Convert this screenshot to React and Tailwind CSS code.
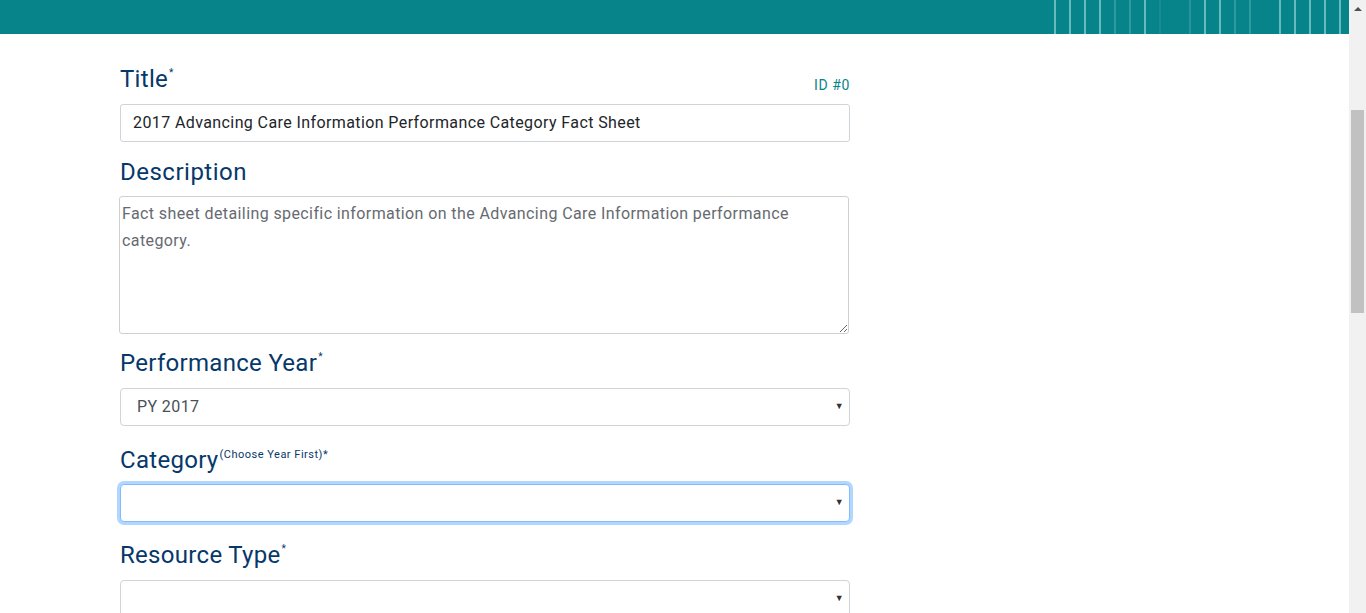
import React from "react";

const lines = [
  "opacity-60", "opacity-60", "opacity-60", "opacity-60", "opacity-25",
  "opacity-25", "opacity-60", "opacity-10", "opacity-0", "opacity-20",
  "opacity-60", "opacity-60", "opacity-25", "opacity-25", "opacity-0",
  "opacity-60", "opacity-60", "opacity-60", "opacity-60", "opacity-60",
];

const Label = ({ children, sup = "*", wide }) => (
  <label className="flex items-start text-[24px] leading-[29px] text-[#06386a] tracking-[0.3px]">
    {children}
    <span
      className={`leading-none mt-[3px] ml-[1px] ${
        wide ? "text-[11px] tracking-[0.5px]" : "text-[10px] tracking-normal"
      }`}
    >
      {sup}
    </span>
  </label>
);

const Select = ({ value, focus }) => (
  <div
    className={`h-[38px] flex items-center justify-between pl-[16px] pr-[5px] rounded-[4px] bg-white text-[16px] tracking-[0.4px] text-[#495057] ${
      focus
        ? "border border-[#80bdff] ring-[3px] ring-[#007bff]/30"
        : "border border-[#ced4da]"
    }`}
  >
    <span>{value}</span>
    <span className="text-[9px] text-[#333]">▼</span>
  </div>
);

export default function App() {
  return (
    <div className="flex h-screen overflow-hidden bg-white font-['Roboto',sans-serif]">
      <div className="flex-1 flex flex-col">
        {/* header bar */}
        <div className="h-[34px] shrink-0 bg-[#07848a] flex justify-end items-stretch pr-[8px] gap-[13px]">
          {lines.map((o, i) => (
            <div key={i} className={`w-[2px] bg-[#a6dcdd] ${o}`} />
          ))}
        </div>

        <div className="pl-[120px] pt-[31px] shrink-0">
          <div className="w-[730px]">
            <div className="flex justify-between items-end">
              <Label>Title</Label>
              <span className="text-[14px] text-[#07848a] -mb-[2px] tracking-[0.6px]">ID #0</span>
            </div>
            <div className="mt-[10px] h-[38px] border border-[#ced4da] rounded-[3px] flex items-center px-[12px] text-[16px] tracking-[0.4px] text-[#212529]">
              2017 Advancing Care Information Performance Category Fact Sheet
            </div>

            <div className="mt-[16px]">
              <label className="block text-[24px] leading-[29px] text-[#06386a] tracking-[0.5px]">Description</label>
            </div>
            <textarea
              className="mt-[9px] -ml-[1px] w-[730px] h-[138px] border border-[#d0d0d0] rounded-[3px] px-[2px] py-[3px] text-[16px] leading-[27px] tracking-[0.4px] text-[#666a70] resize-y outline-none block"
              defaultValue="Fact sheet detailing specific information on the Advancing Care Information performance category."
            />

            <div className="mt-[15px]">
              <Label>Performance Year</Label>
            </div>
            <div className="mt-[10px]">
              <Select value="PY 2017" />
            </div>

            <div className="mt-[20px]">
              <Label sup="(Choose Year First)*" wide>Category</Label>
            </div>
            <div className="mt-[9px]">
              <Select value="" focus />
            </div>

            <div className="mt-[19px]">
              <Label>Resource Type</Label>
            </div>
            <div className="mt-[10px]">
              <Select value="" />
            </div>
          </div>
        </div>
      </div>

      {/* scrollbar */}
      <div className="w-[17px] h-screen bg-[#f1f1f1] flex flex-col items-center">
        <div className="h-[17px] flex items-center justify-center">
          <div className="w-0 h-0 border-l-[4px] border-r-[4px] border-b-[4px] border-l-transparent border-r-transparent border-b-[#505050]" />
        </div>
        <div className="mt-[93px] w-[13px] h-[203px] bg-[#c1c1c1]" />
      </div>
    </div>
  );
}
